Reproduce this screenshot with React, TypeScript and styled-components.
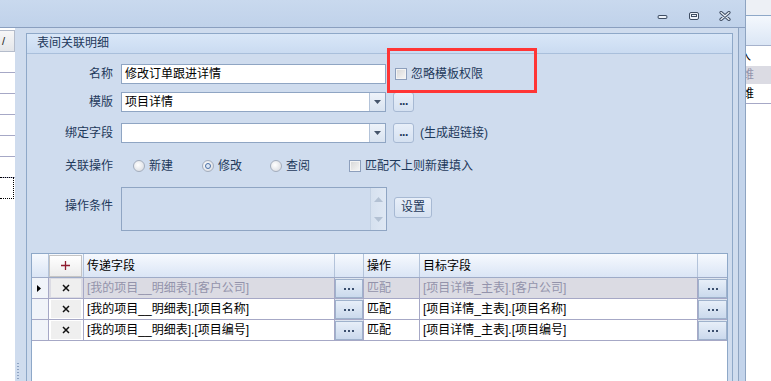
import React from 'react';
import styled, { createGlobalStyle } from 'styled-components';

const FONT = `"Liberation Sans", "Noto Sans CJK SC", sans-serif`;
const COLS = '17px 35px 251px 29px 56px 278px 29px';

const rows = [
  { src: '[我的项目__明细表].[客户公司]', op: '匹配', dst: '[项目详情_主表].[客户公司]', sel: true },
  { src: '[我的项目__明细表].[项目名称]', op: '匹配', dst: '[项目详情_主表].[项目名称]', sel: false },
  { src: '[我的项目__明细表].[项目编号]', op: '匹配', dst: '[项目详情_主表].[项目编号]', sel: false },
];

export default function App() {
  return (
    <>
      <GlobalStyle />
      <Screen>
        <Dialog>
          <TitleBar>
            <WinBtn title="最小化">
              <svg width="12" height="10" viewBox="0 0 12 10">
                <path d="M2.5 6h6" stroke="#3e4d63" strokeWidth="4" strokeLinecap="round" />
                <path d="M2.5 6h6" stroke="#eef3fa" strokeWidth="2" strokeLinecap="round" />
              </svg>
            </WinBtn>
            <WinBtn title="最大化">
              <svg width="12" height="10" viewBox="0 0 12 10">
                <rect x="1.5" y="1.5" width="9" height="7" rx="1.5" fill="#eef3fa" stroke="#3e4d63" />
                <rect x="3.5" y="3.5" width="5" height="2" fill="none" stroke="#3e4d63" />
              </svg>
            </WinBtn>
            <WinBtn title="关闭">
              <svg width="12" height="10" viewBox="0 0 12 10">
                <path d="M2 1.5l8 7M10 1.5l-8 7" stroke="#3e4d63" strokeWidth="3.2" strokeLinecap="round" />
                <path d="M2 1.5l8 7M10 1.5l-8 7" stroke="#eef3fa" strokeWidth="1.2" strokeLinecap="round" />
              </svg>
            </WinBtn>
          </TitleBar>

          <Body>
            <SideGrid>
              <SideHeader>/</SideHeader>
              {[0, 1, 2, 3, 4, 5].map(i => <SideRow key={i} />)}
              <SideRow $focus />
            </SideGrid>

            <Splitter><Grip /></Splitter>

            <Main>
              <GroupBox>
                <GroupHeader>表间关联明细</GroupHeader>
                <GroupContent>
                  <FieldRow $h={20} $mt={0}>
                    <Label>名称</Label>
                    <TextBox>修改订单跟进详情</TextBox>
                    <CheckItem $ml={9}>
                      <Check />
                      <CheckText>忽略模板权限</CheckText>
                    </CheckItem>
                  </FieldRow>

                  <FieldRow $h={20} $mt={8}>
                    <Label>模版</Label>
                    <Combo>
                      <ComboText>项目详情</ComboText>
                      <ComboBtn><DownArrow /></ComboBtn>
                    </Combo>
                    <DotsBtn>...</DotsBtn>
                  </FieldRow>

                  <FieldRow $h={20} $mt={11}>
                    <Label>绑定字段</Label>
                    <Combo>
                      <ComboText />
                      <ComboBtn><DownArrow /></ComboBtn>
                    </Combo>
                    <DotsBtn>...</DotsBtn>
                    <Hint>(生成超链接)</Hint>
                  </FieldRow>

                  <FieldRow $h={20} $mt={13}>
                    <Label>关联操作</Label>
                    <Options>
                      <Option $w={69}><Radio /><span>新建</span></Option>
                      <Option $w={68}><Radio $on><Dot /></Radio><span>修改</span></Option>
                      <Option $w={79}><Radio /><span>查阅</span></Option>
                      <Option $w={140}><Check /><span>匹配不上则新建填入</span></Option>
                    </Options>
                  </FieldRow>

                  <FieldRow $h={44} $mt={11} $top>
                    <Label $pt={11}>操作条件</Label>
                    <Memo>
                      <MemoText />
                      <MemoScroll>
                        <svg width="9" height="5" viewBox="0 0 9 5"><path d="M0 5L4.5 0 9 5z" fill="#b3c1d3" /></svg>
                        <svg width="9" height="5" viewBox="0 0 9 5"><path d="M0 0h9L4.5 5z" fill="#b3c1d3" /></svg>
                      </MemoScroll>
                    </Memo>
                    <SetBtn>设置</SetBtn>
                  </FieldRow>

                  <Table>
                    <HeadRow>
                      <HeadCell />
                      <HeadCell $center>
                        <AddBtn>
                          <svg width="9" height="9" viewBox="0 0 9 9">
                            <path d="M4.5 0v9M0 4.5h9" stroke="#8e1b2e" strokeWidth="1.3" />
                          </svg>
                        </AddBtn>
                      </HeadCell>
                      <HeadCell>传递字段</HeadCell>
                      <HeadCell />
                      <HeadCell>操作</HeadCell>
                      <HeadCell>目标字段</HeadCell>
                      <HeadCell />
                    </HeadRow>
                    {rows.map((r, i) => (
                      <DataRow key={i} $sel={r.sel}>
                        <IndCell>
                          {r.sel && (
                            <svg width="4" height="7" viewBox="0 0 4 7"><path d="M0 0l4 3.5L0 7z" fill="#000" /></svg>
                          )}
                        </IndCell>
                        <Cell $center>
                          <DelBtn>
                            <svg width="8" height="8" viewBox="0 0 8 8">
                              <path d="M1 1l6 6M7 1L1 7" stroke="#111" strokeWidth="1.5" />
                            </svg>
                          </DelBtn>
                        </Cell>
                        <Cell>{r.src}</Cell>
                        <BtnCell><GridDots /></BtnCell>
                        <Cell>{r.op}</Cell>
                        <Cell>{r.dst}</Cell>
                        <BtnCell><GridDots /></BtnCell>
                      </DataRow>
                    ))}
                  </Table>
                </GroupContent>
                <Highlight />
              </GroupBox>
            </Main>

            <Frame />
          </Body>
        </Dialog>

        <BackStrip>
          <BackTop />
          <BackHeader />
          <BackRow $h={20}><Clip $off={-7}>入</Clip></BackRow>
          <BackRow $h={18} $grey><Clip $off={-4}>维</Clip></BackRow>
          <BackRow $h={20} $line><Clip $off={-4} $dark>维</Clip></BackRow>
        </BackStrip>
      </Screen>
    </>
  );
}

function DownArrow() {
  return (
    <svg width="7" height="4" viewBox="0 0 7 4"><path d="M0 0h7L3.5 4z" fill="#46556b" /></svg>
  );
}

function GridDots() {
  return (
    <svg width="10" height="2" viewBox="0 0 10 2">
      <rect x="0" y="0" width="2" height="2" fill="#3b4f6e" />
      <rect x="4" y="0" width="2" height="2" fill="#3b4f6e" />
      <rect x="8" y="0" width="2" height="2" fill="#3b4f6e" />
    </svg>
  );
}

const GlobalStyle = createGlobalStyle`
  html, body { margin: 0; padding: 0; background: #ffffff; }
  body { font-family: ${FONT}; font-size: 12px; }
  * { box-sizing: border-box; }
`;

const Screen = styled.div`
  width: 771px;
  height: 381px;
  display: flex;
  overflow: hidden;
  font-family: ${FONT};
  font-size: 12px;
  line-height: 16px;
`;

const Dialog = styled.div`
  width: 746px;
  height: 100%;
  display: flex;
  flex-direction: column;
  border-right: 1px solid #8ea4c1;
`;

const TitleBar = styled.div`
  height: 28px;
  flex-shrink: 0;
  display: flex;
  justify-content: flex-end;
  padding-right: 5px;
  background: linear-gradient(#c9d9ee, #c0d2ea);
  border-bottom: 1px solid #8a9fbf;
`;

const WinBtn = styled.div`
  width: 31px;
  height: 27px;
  display: flex;
  justify-content: center;
  padding-top: 11px;
`;

const Body = styled.div`
  flex: 1;
  min-height: 0;
  display: flex;
`;

const SideGrid = styled.div`
  width: 15px;
  flex-shrink: 0;
  background: #ffffff;
  padding-top: 2px;
  overflow: hidden;
`;

const SideHeader = styled.div`
  height: 22px;
  border: 1px solid #b4bccb;
  border-left: none;
  background: linear-gradient(#f7f7f7, #e4e6ea);
  padding-left: 2px;
  line-height: 20px;
  font-size: 11px;
  color: #222;
`;

const SideRow = styled.div<{ $focus?: boolean }>`
  height: 21px;
  border-bottom: 1px solid #a6a8c6;
  ${({ $focus }) => $focus && 'border: 1px dotted #000; border-left: none; margin-right: 1px; margin-top: -1px; height: 22px;'}
`;

const Splitter = styled.div`
  width: 11px;
  flex-shrink: 0;
  background: #cfdcee;
  display: flex;
  flex-direction: column;
  justify-content: flex-end;
`;

const Grip = styled.div`
  width: 2px;
  height: 18px;
  margin-left: 2px;
  background: repeating-linear-gradient(to bottom, #8ea3c2 0 1px, transparent 1px 3px);
`;

const Main = styled.div`
  flex: 1;
  min-width: 0;
  background: #cfdcee;
  padding: 5px 5px 0 0;
  display: flex;
  flex-direction: column;
`;

const Frame = styled.div`
  width: 7px;
  flex-shrink: 0;
  border-left: 1px solid #8ea4c1;
  background: #c3d4eb;
`;

const GroupBox = styled.div`
  flex: 1;
  position: relative;
  display: flex;
  flex-direction: column;
  border: 1px solid #8ea8c8;
  border-bottom: none;
`;

const GroupHeader = styled.div`
  height: 20px;
  flex-shrink: 0;
  padding-left: 10px;
  line-height: 19px;
  color: #1e395b;
  background: linear-gradient(#d9e7f8, #cadbf1);
  border-bottom: 1px solid #a9bfdb;
`;

const GroupContent = styled.div`
  flex: 1;
  display: flex;
  flex-direction: column;
  padding: 10px 4px 0 4px;
`;

const Highlight = styled.div`
  position: absolute;
  left: 360px;
  top: 14px;
  width: 150px;
  height: 45px;
  border: 3px solid #ff3535;
  pointer-events: none;
`;

const FieldRow = styled.div<{ $h: number; $mt: number; $top?: boolean }>`
  height: ${({ $h }) => $h}px;
  margin-top: ${({ $mt }) => $mt}px;
  display: flex;
  align-items: ${({ $top }) => ($top ? 'flex-start' : 'center')};
  flex-shrink: 0;
`;

const Label = styled.div<{ $pt?: number }>`
  width: 82px;
  margin-right: 8px;
  flex-shrink: 0;
  text-align: right;
  color: #1e395b;
  padding-top: ${({ $pt }) => $pt ?? 0}px;
`;

const TextBox = styled.div`
  width: 265px;
  height: 20px;
  border: 1px solid #8fa5c3;
  background: #ffffff;
  padding-left: 3px;
  line-height: 18px;
  color: #000;
`;

const Combo = styled.div`
  width: 265px;
  height: 20px;
  display: flex;
  border: 1px solid #8fa5c3;
  background: #ffffff;
`;

const ComboText = styled.div`
  flex: 1;
  padding-left: 3px;
  line-height: 18px;
  color: #000;
`;

const ComboBtn = styled.div`
  width: 16px;
  display: flex;
  align-items: center;
  justify-content: center;
  border-left: 1px solid #b3c3d9;
  background: linear-gradient(#eef3fa, #d9e3f0);
`;

const DotsBtn = styled.div`
  width: 21px;
  height: 20px;
  margin-left: 7px;
  border: 1px solid #a7b9d3;
  border-radius: 3px;
  background: linear-gradient(#e8eff9, #d5e1f1);
  color: #1e395b;
  text-align: center;
  line-height: 17px;
  font-weight: bold;
  letter-spacing: -0.5px;
`;

const Hint = styled.span`
  margin-left: 6px;
  color: #1e395b;
`;

const CheckItem = styled.div<{ $ml: number }>`
  margin-left: ${({ $ml }) => $ml}px;
  display: flex;
  align-items: center;
  gap: 4px;
`;

const CheckText = styled.span`
  color: #1e395b;
`;

const Check = styled.span`
  width: 12px;
  height: 12px;
  flex-shrink: 0;
  border: 1px solid #8d9fbc;
  background: linear-gradient(135deg, #d6d6d6, #f7f7f7);
  box-shadow: inset 0 0 0 1px #f4f4f4;
`;

const Options = styled.div`
  display: flex;
  align-items: center;
  margin-left: 12px;
`;

const Option = styled.div<{ $w: number }>`
  width: ${({ $w }) => $w}px;
  flex-shrink: 0;
  display: flex;
  align-items: center;
  gap: 4px;
  color: #1e395b;
`;

const Radio = styled.span<{ $on?: boolean }>`
  width: 12px;
  height: 12px;
  flex-shrink: 0;
  border-radius: 50%;
  border: 1px solid #a3adbd;
  background: radial-gradient(circle at 40% 40%, #ffffff, #d3d6dc);
  display: flex;
  align-items: center;
  justify-content: center;
`;

const Dot = styled.span`
  width: 6px;
  height: 6px;
  border-radius: 50%;
  border: 1.5px solid #4a6fa5;
  background: #dde7f5;
`;

const Memo = styled.div`
  width: 266px;
  height: 44px;
  display: flex;
  border: 1px solid #8fa5c3;
  background: #cfdcee;
`;

const MemoText = styled.div`
  flex: 1;
`;

const MemoScroll = styled.div`
  width: 16px;
  display: flex;
  flex-direction: column;
  align-items: center;
  justify-content: space-between;
  padding: 9px 0 8px;
  border-left: 1px solid #c3d1e3;
  background: linear-gradient(to right, #d6e1ef, #dfe8f4);
`;

const SetBtn = styled.div`
  width: 38px;
  height: 21px;
  margin: 10px 0 0 7px;
  border: 1px solid #a7b9d3;
  border-radius: 3px;
  background: linear-gradient(#e8eff9, #d5e1f1);
  color: #1e395b;
  text-align: center;
  line-height: 19px;
`;

const Table = styled.div`
  flex: 1;
  margin-top: 22px;
  border: 1px solid #8ea8c8;
  border-bottom: none;
  background: #ffffff;
`;

const HeadRow = styled.div`
  display: grid;
  grid-template-columns: ${COLS};
  height: 24px;
  border-bottom: 1px solid #9eabc7;
  background: linear-gradient(#f6f9fe, #dae5f5);
`;

const HeadCell = styled.div<{ $center?: boolean }>`
  display: flex;
  align-items: center;
  justify-content: ${({ $center }) => ($center ? 'center' : 'flex-start')};
  padding-left: ${({ $center }) => ($center ? 0 : 3)}px;
  border-right: 1px solid #b3c3da;
  color: #000;
  &:last-child { border-right: none; }
`;

const AddBtn = styled.div`
  width: 33px;
  height: 22px;
  margin-left: -1px;
  display: flex;
  align-items: center;
  justify-content: center;
  border: 1px solid #c4c4c4;
  background: linear-gradient(#ffffff, #ececec);
`;

const DataRow = styled.div<{ $sel?: boolean }>`
  display: grid;
  grid-template-columns: ${COLS};
  height: 21px;
  border-bottom: 1px solid #a6a8c6;
  background: ${({ $sel }) => ($sel ? '#dbdbe3' : '#ffffff')};
  color: ${({ $sel }) => ($sel ? '#9393ab' : '#000000')};
`;

const Cell = styled.div<{ $center?: boolean }>`
  display: flex;
  align-items: center;
  justify-content: ${({ $center }) => ($center ? 'center' : 'flex-start')};
  padding-left: ${({ $center }) => ($center ? 0 : 3)}px;
  border-right: 1px solid #a6a8c6;
  white-space: nowrap;
  overflow: hidden;
  &:last-child { border-right: none; }
`;

const IndCell = styled(Cell)`
  background: #f1f4f9;
  padding-left: 5px;
`;

const DelBtn = styled.div`
  width: 30px;
  height: 18px;
  margin-left: -1px;
  display: flex;
  align-items: center;
  justify-content: center;
  background: #efefef;
`;

const BtnCell = styled.div`
  display: flex;
  align-items: center;
  justify-content: center;
  border-right: 1px solid #a6a8c6;
  border-top: 1px solid #dfe6f0;
  background: linear-gradient(#e9f0f9, #c9d8ec);
  box-shadow: inset 0 0 0 1px #9fb2cc;
  &:last-child { border-right: none; }
`;

const BackStrip = styled.div`
  flex: 1;
  background: #ffffff;
  display: flex;
  flex-direction: column;
  overflow: hidden;
`;

const BackTop = styled.div`
  height: 16px;
  background: #edf0f5;
  border-bottom: 1px solid #8ea8c8;
`;

const BackHeader = styled.div`
  height: 30px;
  background: linear-gradient(#f4f8fd, #dbe6f5);
  border-bottom: 1px solid #a6b2cc;
`;

const BackRow = styled.div<{ $h: number; $grey?: boolean; $line?: boolean }>`
  height: ${({ $h }) => $h}px;
  background: ${({ $grey }) => ($grey ? '#dbdbe3' : '#ffffff')};
  border-bottom: 1px solid ${({ $line }) => ($line ? '#a6a8c6' : 'transparent')};
  display: flex;
  align-items: center;
  overflow: hidden;
`;

const Clip = styled.span<{ $off: number; $dark?: boolean }>`
  margin-left: ${({ $off }) => $off}px;
  color: ${({ $dark }) => ($dark ? '#000' : '#9393ab')};
  &:first-child { color: ${({ $dark, $off }) => ($dark || $off === -7 ? '#000' : '#9393ab')}; }
`;
